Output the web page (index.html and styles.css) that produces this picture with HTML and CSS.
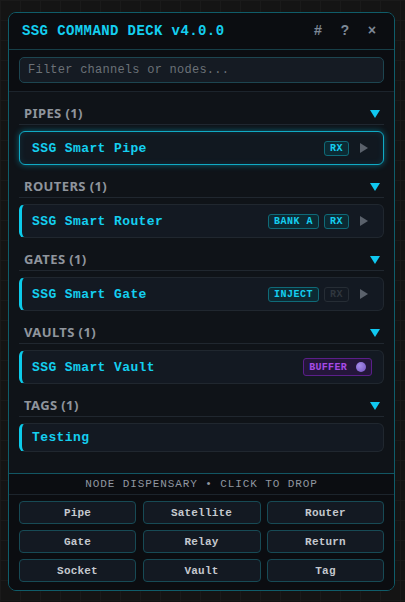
FILE: index.html
```html
<!DOCTYPE html>
<html lang="en">
<head>
  <meta charset="UTF-8">
  <meta name="viewport" content="width=device-width, initial-scale=1">
  <title>SSG Command Deck</title>
  <link rel="stylesheet" href="styles.css">
</head>
<body>
  <div class="deck">
    <div class="deck-head">
      <div class="title">SSG COMMAND DECK v4.0.0</div>
      <div class="head-icons">
        <span>#</span>
        <span>?</span>
        <span>×</span>
      </div>
    </div>

    <div class="search">
      <input type="text" placeholder="Filter channels or nodes...">
    </div>

    <div class="list">
      <div class="group">
        <div class="group-head"><span>PIPES (1)</span><span class="caret"></span></div>
        <div class="node selected">
          <span class="node-name">SSG Smart Pipe</span>
          <span class="tags"><span class="badge">RX</span><span class="arrow"></span></span>
        </div>
      </div>

      <div class="group">
        <div class="group-head"><span>ROUTERS (1)</span><span class="caret"></span></div>
        <div class="node">
          <span class="node-name">SSG Smart Router</span>
          <span class="tags"><span class="badge">BANK A</span><span class="badge">RX</span><span class="arrow"></span></span>
        </div>
      </div>

      <div class="group">
        <div class="group-head"><span>GATES (1)</span><span class="caret"></span></div>
        <div class="node">
          <span class="node-name">SSG Smart Gate</span>
          <span class="tags"><span class="badge">INJECT</span><span class="badge off">RX</span><span class="arrow"></span></span>
        </div>
      </div>

      <div class="group">
        <div class="group-head"><span>VAULTS (1)</span><span class="caret"></span></div>
        <div class="node">
          <span class="node-name">SSG Smart Vault</span>
          <span class="tags"><span class="buffer">BUFFER <i class="dot"></i></span></span>
        </div>
      </div>

      <div class="group">
        <div class="group-head"><span>TAGS (1)</span><span class="caret"></span></div>
        <div class="node short">
          <span class="node-name">Testing</span>
        </div>
      </div>
    </div>

    <div class="dispensary">
      <div class="disp-title">NODE DISPENSARY • CLICK TO DROP</div>
      <div class="disp-grid">
        <button>Pipe</button>
        <button>Satellite</button>
        <button>Router</button>
        <button>Gate</button>
        <button>Relay</button>
        <button>Return</button>
        <button>Socket</button>
        <button>Vault</button>
        <button>Tag</button>
      </div>
    </div>
  </div>
</body>
</html>
```

FILE: styles.css
```css
body {
  margin: 0;
  height: 602px;
  background-color: #141414;
  background-image:
    linear-gradient(#1a1a1a 1px, transparent 1px),
    linear-gradient(90deg, #1a1a1a 1px, transparent 1px);
  background-size: 20px 20px;
  font-family: "Liberation Mono", "Courier New", monospace;
  overflow: hidden;
}

.deck {
  margin: 12px 0 0 8px;
  width: 385px;
  height: 577px;
  border: 1px solid #0f5c69;
  border-radius: 8px;
  background: #0f1318;
  display: flex;
  flex-direction: column;
  overflow: hidden;
}

.deck-head {
  height: 36px;
  display: flex;
  align-items: center;
  justify-content: space-between;
  padding: 0 17px 0 13px;
  background: #0b0d11;
  border-bottom: 1px solid #173f48;
}

.title {
  color: #14cff0;
  font-weight: bold;
  font-size: 14px;
  letter-spacing: 0.4px;
}

.head-icons {
  display: flex;
  gap: 17px;
  color: #7d8896;
  font-size: 14px;
  font-weight: bold;
}

.head-icons span {
  width: 10px;
  text-align: center;
}

.search {
  padding: 7px 10px 8px;
  border-bottom: 1px solid #1c242c;
  background: #0b0d11;
}

.search input {
  display: block;
  box-sizing: border-box;
  width: 100%;
  height: 26px;
  background: #151b23;
  border: 1px solid #1d4550;
  border-radius: 5px;
  padding: 0 8px;
  font-family: "Liberation Mono", monospace;
  font-size: 12px;
  letter-spacing: 0.25px;
  color: #c9d1d9;
  outline: none;
}

.search input::placeholder {
  color: #6b7177;
}

.list {
  flex: 1;
  padding: 7px 10px 0;
  background: #0f1318;
}

.group {
  margin-bottom: 7px;
}

.group-head {
  display: flex;
  justify-content: space-between;
  align-items: center;
  padding: 6px 4px 3px 5px;
  line-height: 16px;
  border-bottom: 1px solid #20272f;
  margin-bottom: 6px;
  font-family: "Noto Sans", sans-serif;
  font-weight: bold;
  font-size: 13px;
  letter-spacing: 0.4px;
  color: #8f959d;
}

.caret {
  width: 0;
  height: 0;
  border-left: 5px solid transparent;
  border-right: 5px solid transparent;
  border-top: 8px solid #10c8f0;
  margin-top: 2px;
}

.node {
  height: 32px;
  display: flex;
  align-items: center;
  justify-content: space-between;
  padding: 0 15px 0 10px;
  background: #131922;
  border: 1px solid #20272f;
  border-left: 3px solid #0ccbeb;
  border-radius: 6px;
}

.node.selected {
  padding-left: 12px;
  border: 1px solid #10aac4;
  background: #111820;
  box-shadow: 0 0 6px rgba(0, 200, 240, 0.45), inset 0 0 6px rgba(0, 200, 240, 0.12);
}

.node.short {
  height: 27px;
}

.node-name {
  color: #14cff0;
  font-weight: bold;
  font-size: 13px;
  letter-spacing: 0.4px;
}

.tags {
  display: flex;
  align-items: center;
  gap: 5px;
}

.badge {
  height: 13px;
  line-height: 13px;
  padding: 0 5px;
  border: 1px solid #0f6a78;
  border-radius: 3px;
  background: #0c2a33;
  color: #14cff0;
  font-weight: bold;
  font-size: 10px;
  letter-spacing: 0.5px;
}

.badge.off {
  border-color: #262d35;
  background: transparent;
  color: #2f363e;
}

.arrow {
  width: 0;
  height: 0;
  border-top: 5px solid transparent;
  border-bottom: 5px solid transparent;
  border-left: 8px solid #5a616b;
  margin-left: 6px;
}

.buffer {
  display: flex;
  align-items: center;
  gap: 9px;
  height: 16px;
  padding: 0 5px 0 5px;
  border: 1px solid #5b1f8a;
  border-radius: 3px;
  background: #24163a;
  color: #a64ae6;
  font-weight: bold;
  font-size: 10px;
  letter-spacing: 0.3px;
  margin-right: -4px;
}

.dot {
  width: 10px;
  height: 10px;
  border-radius: 50%;
  background: radial-gradient(circle at 35% 35%, #a58ce8, #7552c4);
}

.dispensary {
  border-top: 1px solid #125663;
  background: #0b0d11;
}

.disp-title {
  height: 20px;
  line-height: 20px;
  text-align: center;
  color: #9097a0;
  font-size: 11px;
  letter-spacing: 0.9px;
  border-bottom: 1px solid #1c242c;
}

.disp-grid {
  display: grid;
  grid-template-columns: 117px 118px 117px;
  justify-content: space-between;
  gap: 6px;
  padding: 6px 10px 8px;
}

.disp-grid button {
  height: 23px;
  padding: 0;
  background: #131922;
  border: 1px solid #174a55;
  border-radius: 4px;
  color: #c4c8ce;
  font-family: "Liberation Mono", monospace;
  font-weight: bold;
  font-size: 11px;
  letter-spacing: 0.2px;
  cursor: pointer;
}
```
